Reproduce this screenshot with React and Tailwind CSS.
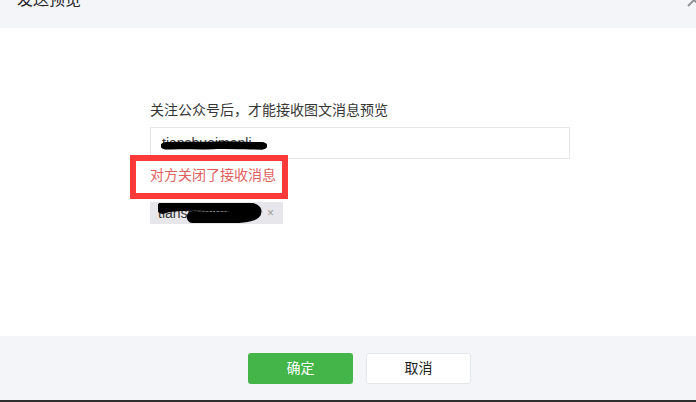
import { useState } from "react";

const font = { fontFamily: '"Liberation Sans", "Noto Sans CJK SC", sans-serif' };

function Scribble({ className, d, width = 9 }) {
  return (
    <svg className={className} viewBox="0 0 120 24" preserveAspectRatio="none" fill="none">
      <path d={d} stroke="#000" strokeWidth={width} strokeLinecap="round" strokeLinejoin="round" />
    </svg>
  );
}

export default function App() {
  const [name] = useState("tianshuaimenli");

  return (
    <div className="relative flex h-[402px] w-[696px] flex-col overflow-hidden bg-white text-[#353535]" style={font}>
      <div className="flex h-[28px] shrink-0 items-start justify-between bg-[#f4f5f9] pl-[17px]">
        <h3 className="-mt-[10px] text-[16px] leading-[20px] text-[#222]">发送预览</h3>
        <svg className="-mt-[8px] mr-[-6px] h-[16px] w-[16px]" viewBox="0 0 16 16" fill="none">
          <path d="M2 14 L14 2 M2 2 L14 14" stroke="#8d8d8d" strokeWidth="1.8" />
        </svg>
      </div>

      <div className="flex flex-1 flex-col pl-[150px] pt-[72px]">
        <p className="text-[14px] leading-[20px]">关注公众号后，才能接收图文消息预览</p>

        <div className="relative mt-[7px] flex h-[32px] w-[420px] items-center border border-[#e7e7eb] px-[11px] text-[14px]">
          <span>{name}</span>
          <Scribble
            className="absolute left-[10px] top-[12px] h-[14px] w-[106px]"
            d="M6 10 C24 8 44 11 62 9 C80 8 98 10 114 10"
            width={13}
          />
        </div>

        <p className="mt-[6px] text-[14px] leading-[20px] text-[#e15f5f]">对方关闭了接收消息</p>

        <div className="mt-[17px] flex h-[22px] w-[133px] items-center bg-[#e7e7eb] pl-[8px] text-[14px]">
          <span className="relative w-[106px] overflow-hidden whitespace-nowrap">
            tianshuaimen
            <Scribble
              className="absolute left-[-3px] top-[-4px] h-[24px] w-[112px]"
              d="M8 9 C20 4 40 6 60 6 C80 6 104 8 108 12 C110 18 80 20 40 18"
              width={12}
            />
          </span>
          <span className="ml-[3px] text-[12px] text-[#9a9a9a]">×</span>
        </div>
      </div>

      <div className="flex h-[64px] shrink-0 items-start justify-center gap-[13px] bg-[#f4f5f9] pl-[23px] pt-[17px]">
        <button className="h-[31px] w-[105px] rounded-[3px] bg-[#44b549] text-[14px] text-white">确定</button>
        <button className="h-[31px] w-[105px] rounded-[3px] border border-[#e4e8eb] bg-white text-[14px] text-[#222]">取消</button>
      </div>
      <div className="h-[2px] shrink-0 bg-[#2e2e2e]" />

      <div className="pointer-events-none absolute left-[130px] top-[155px] h-[44px] w-[158px] border-[6px] border-[#fc3a3a]" />
    </div>
  );
}
